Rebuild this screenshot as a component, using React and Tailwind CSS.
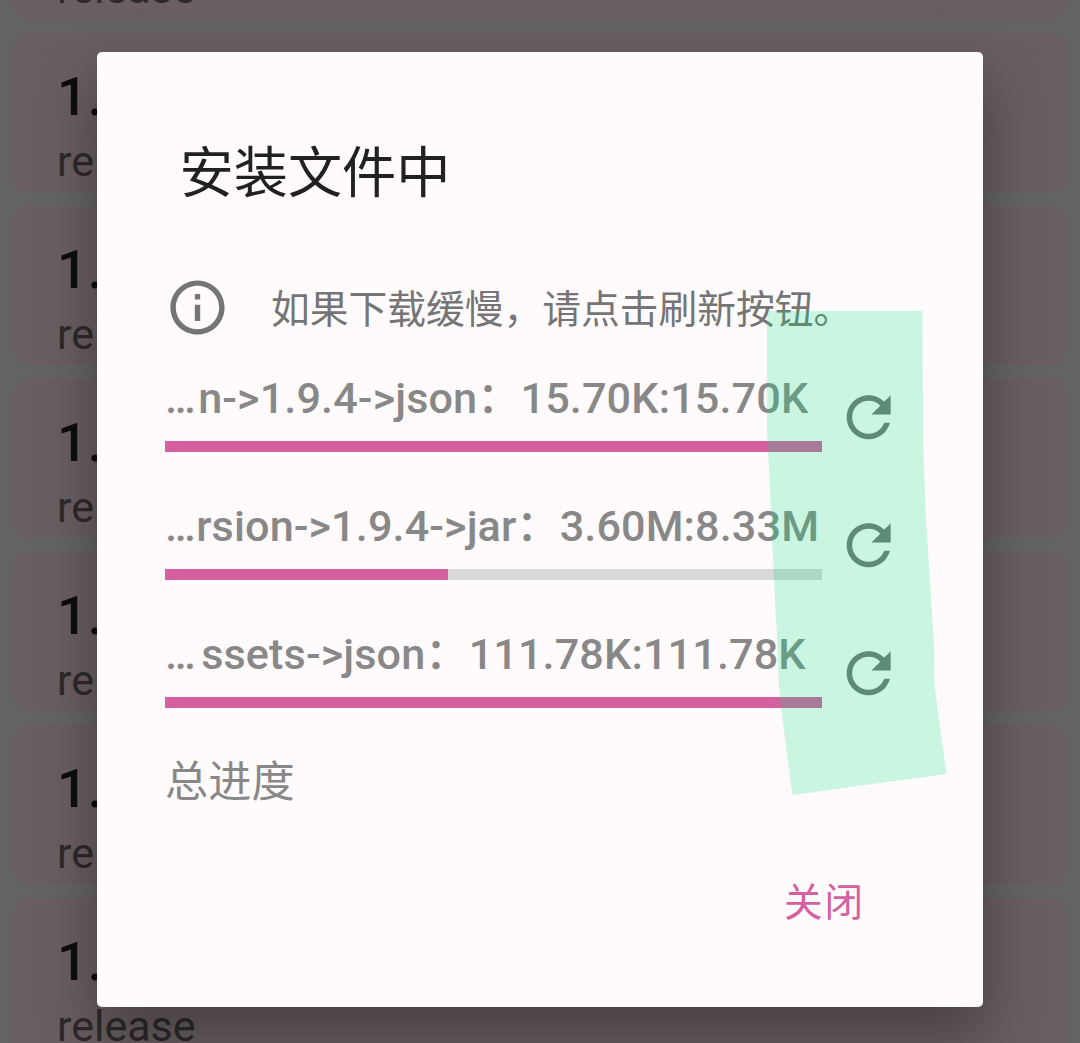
const cards = [0, 1, 2, 3, 4, 5, 6];

const downloads = [
  { tail: 'n->1.9.4->json：', amount: '15.70K:15.70K', gap: 'ml-[2.5px]', progress: 100 },
  { tail: 'rsion->1.9.4->jar：', amount: '3.60M:8.33M', gap: 'ml-[0.5px]', progress: 43.07 },
  { tail: 'ssets->json：', amount: '111.78K:111.78K', gap: 'ml-[5.5px]', progress: 100 },
];

function VersionCard() {
  return (
    <div className="h-[159px] shrink-0 rounded-[14px] bg-[#695e61] pl-[43px] pt-[32px]">
      <div className="h-[64px] text-[54px] leading-[64px] font-medium text-[#0c0c0c]">1.9.4</div>
      <div className="mt-[7px] h-[50px] text-[43px] leading-[50px] text-[#2c292a]">release</div>
    </div>
  );
}

function DownloadRow({ item }) {
  return (
    <div className="flex h-[128px]">
      <div className="w-[657px]">
        <div className="flex h-[79px] items-center whitespace-nowrap pb-[6px] text-[43.2px] leading-[52px] font-medium tracking-[0.11px] text-[#888888]">
          <span>…</span>
          <span className={item.gap}>{item.tail}</span>
          <span>{item.amount}</span>
        </div>
        <div className="h-[11px] bg-[#d9d8d8]">
          <div className="h-full bg-[#d4609f]" style={{ width: `${item.progress}%` }} />
        </div>
      </div>
      <svg className="ml-[14px] mt-[22px] size-[66px] shrink-0 fill-[#757575]" viewBox="0.12 -0.12 24 24">
        <path d="M17.65 6.35C16.2 4.9 14.21 4 12 4c-4.42 0-7.99 3.58-7.99 8s3.57 8 7.99 8c3.73 0 6.84-2.55 7.73-6h-2.08c-.82 2.33-3.04 4-5.65 4-3.31 0-6-2.69-6-6s2.69-6 6-6c1.66 0 3.14.69 4.22 1.78L13 11h7V4l-2.35 2.35z" />
      </svg>
    </div>
  );
}

export default function App() {
  return (
    <div className="relative h-[1043px] w-[1080px] overflow-hidden bg-[#646464] font-[Roboto,'Noto_Sans_CJK_SC',sans-serif]">
      <div className="-mt-[140px] flex flex-col gap-[14px] px-[14px]">
        {cards.map((c) => <VersionCard key={c} />)}
      </div>

      <div className="absolute left-[97px] top-[52px] flex h-[955px] w-[886px] flex-col rounded-[5px] bg-[#fffbfd] pl-[68px] shadow-[0_28px_60px_rgba(0,0,0,0.34)]">
        <h1 className="ml-[14.5px] mt-[82px] h-[80px] text-[54.2px] leading-[80px] text-[#212121]">安装文件中</h1>
        <div className="mt-[51px] flex h-[84px] items-center">
          <svg className="size-[65px] shrink-0 fill-[#757575]" viewBox="0 0 24 24">
            <path d="M11 7h2v2h-2zm0 4h2v6h-2zm1-9C6.48 2 2 6.48 2 12s4.48 10 10 10 10-4.48 10-10S17.52 2 12 2zm0 18c-4.41 0-8-3.59-8-8s3.59-8 8-8 8 3.59 8 8-3.59 8-8 8z" />
          </svg>
          <p className="ml-[41px] whitespace-nowrap pt-[7px] text-[38.75px] text-[#757575]">如果下载缓慢，请点击刷新按钮。</p>
        </div>
        <div className="mt-[13px]">
          {downloads.map((d) => <DownloadRow key={d.tail} item={d} />)}
        </div>
        <div className="mt-[5px] h-[64px] text-[43.2px] leading-[64px] text-[#888888]">总进度</div>
        <button className="ml-[619px] mt-[60px] h-[56px] w-[90px] text-left text-[38.6px] leading-[56px] tracking-[2px] text-[#d4609f]">关闭</button>
      </div>

      <svg className="pointer-events-none absolute left-[766px] top-[310px] h-[487px] w-[182px]" viewBox="766 310 182 487">
        <path d="M767 311H922.5L923 440L926 520L930.5 590L934 645L934.5 683L937 704L946.5 774L792.5 795L780.5 704L778.5 680L777.5 645L774.5 590L769 470L767 430Z" fill="#00de7c" fillOpacity="0.21" />
      </svg>
    </div>
  );
}
